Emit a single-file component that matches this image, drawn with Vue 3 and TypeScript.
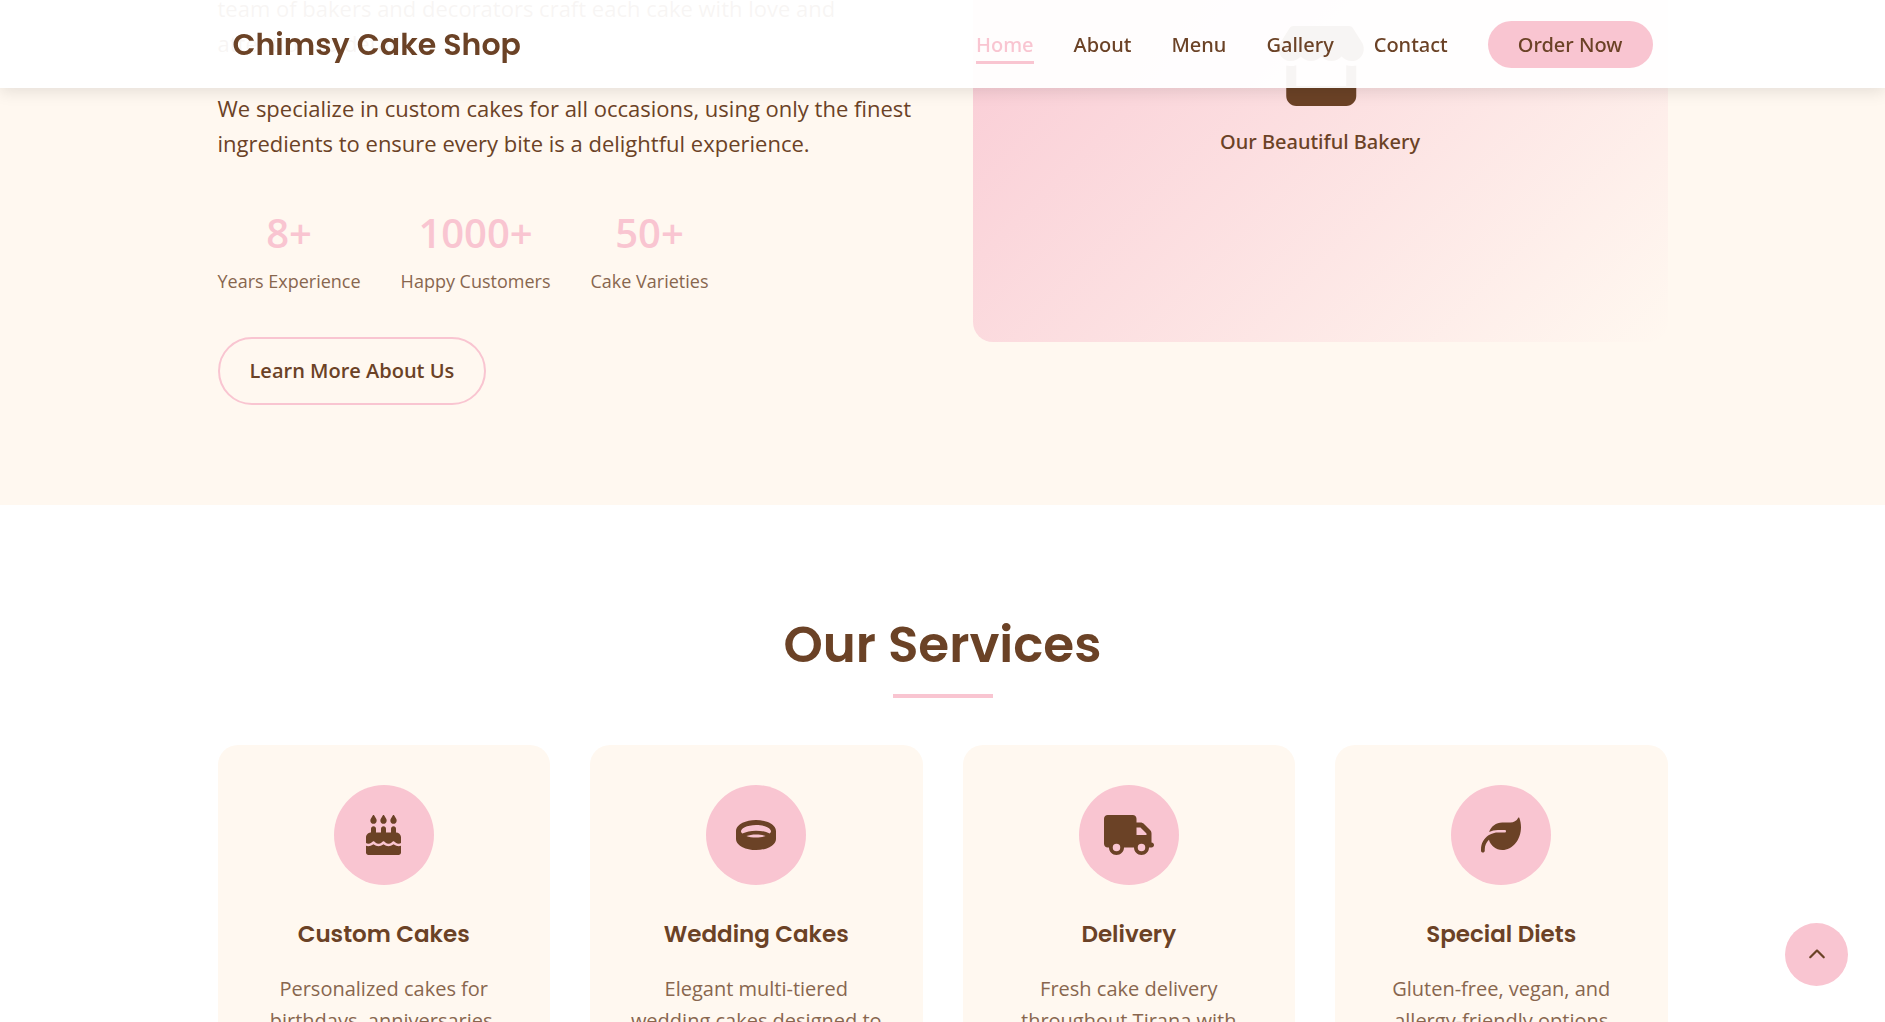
<script setup lang="ts">
interface Link {
  label: string
  href: string
  active?: boolean
}
interface Stat {
  value: string
  label: string
}
interface Service {
  title: string
  text: string
  viewBox: string
  width: number
  path: string
}

const links: Link[] = [
  { label: 'Home', href: '#home', active: true },
  { label: 'About', href: '#about' },
  { label: 'Menu', href: '#menu' },
  { label: 'Gallery', href: '#gallery' },
  { label: 'Contact', href: '#contact' },
]

const stats: Stat[] = [
  { value: '8+', label: 'Years Experience' },
  { value: '1000+', label: 'Happy Customers' },
  { value: '50+', label: 'Cake Varieties' },
]

const services: Service[] = [
  {
    title: 'Custom Cakes',
    text: 'Personalized cakes for birthdays, anniversaries,',
    viewBox: '0 0 448 512',
    width: 35,
    path: 'M86.4 5.5L61.8 47.6C58 54.1 56 61.6 56 69.2V72c0 22.1 17.9 40 40 40s40-17.9 40-40V69.2c0-7.6-2-15-5.8-21.6L105.6 5.5C103.6 2.1 100 0 96 0s-7.6 2.1-9.6 5.5zm128 0L189.8 47.6c-3.8 6.5-5.8 14-5.8 21.6V72c0 22.1 17.9 40 40 40s40-17.9 40-40V69.2c0-7.6-2-15-5.8-21.6L233.6 5.5C231.6 2.1 228 0 224 0s-7.6 2.1-9.6 5.5zM317.8 47.6c-3.8 6.5-5.8 14-5.8 21.6V72c0 22.1 17.9 40 40 40s40-17.9 40-40V69.2c0-7.6-2-15-5.8-21.6L361.6 5.5C359.6 2.1 356 0 352 0s-7.6 2.1-9.6 5.5L317.8 47.6zM128 176c0-17.7-14.3-32-32-32s-32 14.3-32 32v48c-35.3 0-64 28.7-64 64v71c8.3 5.2 18.1 9 28.8 9c13.5 0 27.2-6.1 38.4-13.4c5.4-3.5 9.9-7.1 13-9.7c1.5-1.3 2.7-2.4 3.5-3.1c.4-.4 .7-.6 .8-.8l.1-.1c3.1-3.2 7.4-4.9 11.9-4.8s8.6 2.1 11.6 5.4l.1 .1c.1 .1 .4 .4 .7 .7c.7 .7 1.7 1.7 3.1 3c2.8 2.6 6.8 6.1 11.8 9.5c10.2 7.1 23 13.1 36.3 13.1s26.1-6 36.3-13.1c5-3.5 9-6.9 11.8-9.5c1.4-1.3 2.4-2.3 3.1-3c.3-.3 .6-.6 .7-.7l.1-.1c3-3.5 7.4-5.4 12-5.4s9 2 12 5.4l.1 .1c.1 .1 .4 .4 .7 .7c.7 .7 1.7 1.7 3.1 3c2.8 2.6 6.8 6.1 11.8 9.5c10.2 7.1 23 13.1 36.3 13.1s26.1-6 36.3-13.1c5-3.5 9-6.9 11.8-9.5c1.4-1.3 2.4-2.3 3.1-3c.3-.3 .6-.6 .7-.7l.1-.1c2.9-3.4 7.1-5.3 11.6-5.4s8.7 1.6 11.9 4.8l.1 .1c.2 .2 .4 .4 .8 .8c.8 .7 1.9 1.8 3.5 3.1c3.1 2.6 7.5 6.2 13 9.7c11.2 7.3 24.9 13.4 38.4 13.4c10.7 0 20.5-3.9 28.8-9V288c0-35.3-28.7-64-64-64V176c0-17.7-14.3-32-32-32s-32 14.3-32 32v48H256V176c0-17.7-14.3-32-32-32s-32 14.3-32 32v48H128V176zM448 394.6c-8.5 3.3-18.2 5.4-28.8 5.4c-22.5 0-42.4-9.9-55.8-18.6c-4.1-2.7-7.8-5.4-10.9-7.8c-2.8 2.4-6.1 5-9.8 7.5C329.8 390 310.6 400 288 400s-41.8-10-54.6-18.9c-3.5-2.4-6.7-4.9-9.4-7.2c-2.7 2.3-5.9 4.7-9.4 7.2C201.8 390 182.6 400 160 400s-41.8-10-54.6-18.9c-3.7-2.6-7-5.2-9.8-7.5c-3.1 2.4-6.8 5.1-10.9 7.8C71.2 390.1 51.3 400 28.8 400c-10.6 0-20.3-2.2-28.8-5.4V480c0 17.7 14.3 32 32 32H416c17.7 0 32-14.3 32-32V394.6z',
  },
  {
    title: 'Wedding Cakes',
    text: 'Elegant multi-tiered wedding cakes designed to',
    viewBox: '0 0 512 512',
    width: 40,
    path: 'M64 208c0 7.8 4.4 18.7 17.1 30.3C126.5 214.1 188.9 200 256 200s129.5 14.1 174.9 38.3C443.6 226.7 448 215.8 448 208c0-12.3-10.8-32-47.9-50.6C364.9 139.8 314 128 256 128s-108.9 11.8-144.1 29.4C74.8 176 64 195.7 64 208zm192 40c-47 0-89.3 7.6-122.9 19.7C166.3 280.2 208.8 288 256 288s89.7-7.8 122.9-20.3C345.3 255.6 303 248 256 248zM0 208c0-49.6 39.4-85.8 83.3-107.8C129.1 77.3 190.3 64 256 64s126.9 13.3 172.7 36.2c43.9 22 83.3 58.2 83.3 107.8v96c0 49.6-39.4 85.8-83.3 107.8C382.9 434.7 321.7 448 256 448s-126.9-13.3-172.7-36.2C39.4 389.8 0 353.6 0 304V208z',
  },
  {
    title: 'Delivery',
    text: 'Fresh cake delivery throughout Tirana with',
    viewBox: '0 0 640 512',
    width: 50,
    path: 'M48 0C21.5 0 0 21.5 0 48V368c0 26.5 21.5 48 48 48H64c0 53 43 96 96 96s96-43 96-96H384c0 53 43 96 96 96s96-43 96-96h32c17.7 0 32-14.3 32-32s-14.3-32-32-32V288 256 237.3c0-17-6.7-33.3-18.7-45.3L512 114.7c-12-12-28.3-18.7-45.3-18.7H416V48c0-26.5-21.5-48-48-48H48zM416 160h50.7L544 237.3V256H416V160zM112 416a48 48 0 1 1 96 0 48 48 0 1 1 -96 0zm368-48a48 48 0 1 1 0 96 48 48 0 1 1 0-96z',
  },
  {
    title: 'Special Diets',
    text: 'Gluten-free, vegan, and allergy-friendly options',
    viewBox: '0 0 512 512',
    width: 40,
    path: 'M272 96c-78.6 0-145.1 51.5-167.7 122.5c33.6-17 71.5-26.5 111.7-26.5h88c8.8 0 16 7.2 16 16s-7.2 16-16 16H288 216c-16.6 0-32.7 1.9-48.3 5.4c-25.9 5.9-49.9 16.4-71.4 30.7C38.3 298.8 0 364.9 0 440v16c0 13.3 10.7 24 24 24s24-10.7 24-24V440c0-48.7 20.7-92.5 53.8-123.2C121.6 392.3 190.3 448 272 448l1 0c132.1-.7 239-130.9 239-291.4c0-42.6-7.5-83.1-21.1-119.6c-2.6-6.9-12.7-6.6-16.2-.1C455.9 72.1 418.7 96 376 96L272 96z',
  },
]

function scrollToTop(): void {
  window.scrollTo({ top: 0, behavior: 'smooth' })
}
</script>

<template>
  <div class="page">
    <header class="header">
      <div class="container header-inner">
        <a class="brand" href="#home">Chimsy Cake Shop</a>
        <nav class="nav" aria-label="Main">
          <a
            v-for="link in links"
            :key="link.label"
            class="nav-link"
            :class="{ active: link.active }"
            :href="link.href"
            >{{ link.label }}</a
          >
          <a class="order" href="#order">Order Now</a>
        </nav>
      </div>
    </header>

    <main class="main">
      <section id="about" class="about">
        <div class="container about-grid">
          <div class="about-text">
            <p>team of bakers and decorators craft each cake with love and attention to detail.</p>
            <p>
              We specialize in custom cakes for all occasions, using only the finest ingredients to
              ensure every bite is a delightful experience.
            </p>
            <div class="stats">
              <div v-for="stat in stats" :key="stat.label" class="stat">
                <span class="stat-value">{{ stat.value }}</span>
                <span class="stat-label">{{ stat.label }}</span>
              </div>
            </div>
            <a class="learn-more" href="#about">Learn More About Us</a>
          </div>
          <div class="visual">
            <svg width="90" height="80" viewBox="-8 0 576 512" fill="currentColor" aria-hidden="true">
              <path
                d="M547.6 103.8L490.3 13.1C485.2 5 476.1 0 466.4 0H109.6C99.9 0 90.8 5 85.7 13.1L28.3 103.8c-29.6 46.8-3.4 111.9 51.9 119.4c4 .5 8.1 .8 12.1 .8c26.1 0 49.3-11.4 65.2-29c15.9 17.6 39.1 29 65.2 29c26.1 0 49.3-11.4 65.2-29c15.9 17.6 39.1 29 65.2 29c26.2 0 49.3-11.4 65.2-29c16 17.6 39.1 29 65.2 29c4.1 0 8.1-.3 12.1-.8c55.5-7.4 81.8-72.5 52.1-119.4zM499.7 254.9l-.1 0c-5.3 .7-10.7 1.1-16.2 1.1c-12.4 0-24.3-1.9-35.4-5.3V384H128V250.6c-11.2 3.5-23.2 5.4-35.6 5.4c-5.5 0-11-.4-16.3-1.1l-.1 0c-4.1-.6-8.1-1.3-12-2.3V384v64c0 35.3 28.7 64 64 64H448c35.3 0 64-28.7 64-64V384 252.6c-4 1-8 1.8-12.3 2.3z"
              />
            </svg>
            <p>Our Beautiful Bakery</p>
          </div>
        </div>
      </section>

      <section id="services" class="services">
        <div class="container">
          <h2>Our Services</h2>
          <div class="cards">
            <article v-for="service in services" :key="service.title" class="card">
              <div class="card-icon">
                <svg
                  :width="service.width"
                  height="40"
                  :viewBox="service.viewBox"
                  fill="currentColor"
                  aria-hidden="true"
                >
                  <path :d="service.path" />
                </svg>
              </div>
              <h3>{{ service.title }}</h3>
              <p>{{ service.text }}</p>
            </article>
          </div>
        </div>
      </section>
    </main>

    <button class="to-top" type="button" aria-label="Back to top" @click="scrollToTop">
      <svg width="18" height="18" viewBox="0 0 512 512" fill="currentColor" aria-hidden="true">
        <path
          d="M233.4 105.4c12.5-12.5 32.8-12.5 45.3 0l192 192c12.5 12.5 12.5 32.8 0 45.3s-32.8 12.5-45.3 0L256 173.3 86.6 342.6c-12.5 12.5-32.8 12.5-45.3 0s-12.5-32.8 0-45.3l192-192z"
        />
      </svg>
    </button>
  </div>
</template>

<style>
body {
  margin: 0;
  background: #fff;
}
</style>

<style scoped>
.page {
  --pink: #f9c5d1;
  --brown: #6b4226;
  --cream: #fff8f0;
  --heading: Poppins, Inter, sans-serif;
  --medium: 'Noto Sans', 'Open Sans', sans-serif;
  height: 100vh;
  overflow: hidden;
  color: var(--brown);
  font-family: 'Open Sans', sans-serif;
  font-size: 20px;
  line-height: 32px;
}

.page * {
  box-sizing: border-box;
}

p,
h2,
h3 {
  margin: 0;
}

a {
  color: inherit;
  text-decoration: none;
}

svg {
  display: block;
}

.container {
  max-width: 1450px;
  margin: 0 auto;
}

.header {
  position: fixed;
  top: 0;
  left: 0;
  right: 0;
  z-index: 10;
  background: rgba(255, 255, 255, 0.95);
  box-shadow: 0 4px 15px rgba(0, 0, 0, 0.1);
}

.header-inner {
  display: flex;
  align-items: center;
  justify-content: space-between;
  min-height: 88px;
  padding: 0 15px;
}

.brand {
  padding-top: 2px;
  font-family: var(--heading);
  font-size: 30px;
  font-weight: 600;
}

.nav {
  display: flex;
  align-items: center;
  gap: 40px;
  font-family: var(--medium);
  font-weight: 500;
}

.nav-link {
  padding-top: 5px;
  border-bottom: 3px solid transparent;
}

.nav-link.active {
  color: var(--pink);
  border-bottom-color: var(--pink);
}

.order {
  padding: 8px 30px;
  line-height: 31px;
  border-radius: 24px;
  background: var(--pink);
}

.main {
  margin-top: -158px;
}

.about {
  padding-bottom: 100px;
  background: var(--cream);
}

.about-grid {
  display: grid;
  grid-template-columns: 1fr 1fr;
  gap: 60px;
  align-items: end;
}

.about-text p {
  margin-bottom: 30px;
  font-size: 22px;
  line-height: 35px;
}

.stats {
  display: flex;
  gap: 40px;
  margin: 40px 0;
}

.stat {
  display: flex;
  flex-direction: column;
  align-items: center;
}

.stat-value {
  color: var(--pink);
  font-size: 40px;
  font-weight: 600;
  line-height: 64px;
}

.stat-label {
  font-size: 18px;
  opacity: 0.8;
}

.learn-more {
  display: block;
  width: fit-content;
  padding: 16px 30px;
  border: 2px solid var(--pink);
  border-radius: 34px;
  font-weight: 600;
}

.visual {
  display: flex;
  flex-direction: column;
  align-items: center;
  justify-content: center;
  gap: 20px;
  height: 500px;
  margin-bottom: 63px;
  border-radius: 20px;
  background: linear-gradient(135deg, var(--pink), var(--cream));
  font-family: var(--medium);
  font-weight: 500;
}

.services {
  padding: 100px 0;
  background: #fff;
}

h2 {
  font-family: var(--heading);
  font-size: 50px;
  font-weight: 600;
  line-height: 80px;
  text-align: center;
}

h2::after {
  content: '';
  display: block;
  width: 100px;
  height: 4px;
  margin: 9px auto 47px;
  background: var(--pink);
}

.cards {
  display: grid;
  grid-template-columns: repeat(4, 1fr);
  gap: 40px;
}

.card {
  padding: 40px;
  border-radius: 20px;
  background: var(--cream);
  text-align: center;
}

.card-icon {
  display: flex;
  align-items: center;
  justify-content: center;
  width: 100px;
  height: 100px;
  margin: 0 auto 30px;
  border-radius: 50%;
  background: var(--pink);
}

h3 {
  margin-bottom: 20px;
  font-family: var(--heading);
  font-size: 23px;
  font-weight: 600;
  line-height: 38px;
}

.card p {
  opacity: 0.8;
}

.to-top {
  position: fixed;
  right: 37px;
  bottom: 36px;
  z-index: 10;
  display: flex;
  align-items: center;
  justify-content: center;
  width: 63px;
  height: 63px;
  padding: 0;
  border: 0;
  border-radius: 50%;
  background: var(--pink);
  color: var(--brown);
}
</style>
